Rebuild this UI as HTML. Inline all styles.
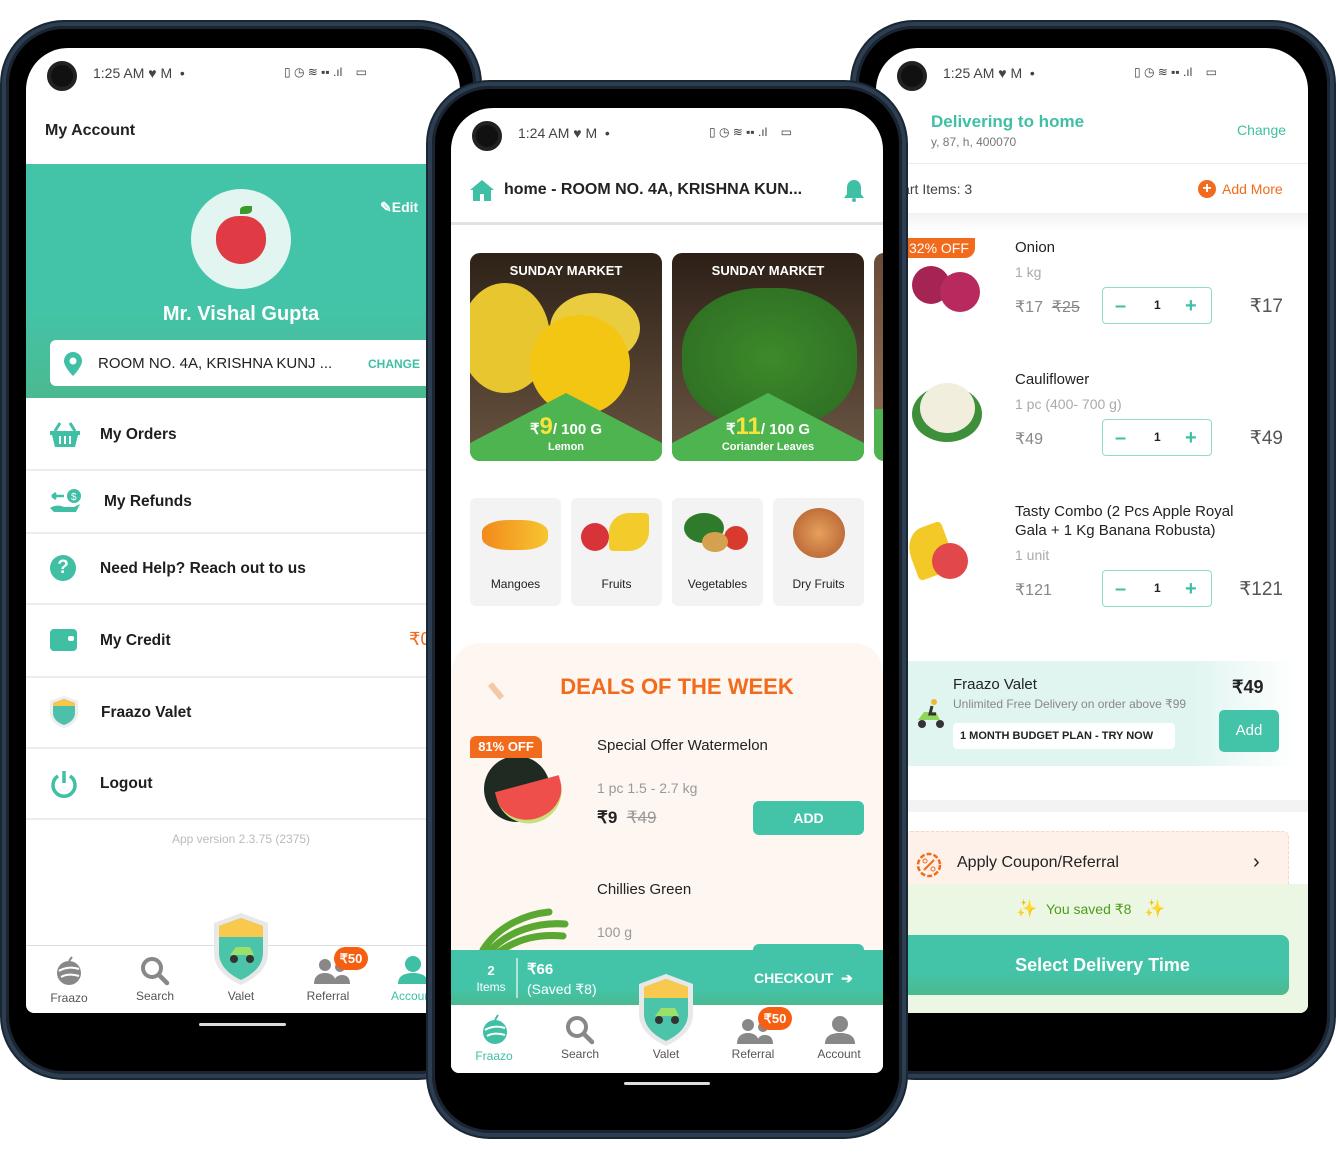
<!DOCTYPE html>
<html><head><meta charset="utf-8"><style>
*{margin:0;padding:0;box-sizing:border-box}
body{width:1336px;height:1171px;background:#fff;position:relative;overflow:hidden;font-family:"Liberation Sans",sans-serif;color:#222}
.a{position:absolute}
.phone{position:absolute;background:#000;border:4px solid #2c3e52;box-shadow:0 0 0 2px #1a2633, inset 0 0 0 3px #1b2430}
.scr{position:absolute;background:#fff;overflow:hidden;border-radius:42px 42px 8px 8px}
.t{position:absolute;white-space:nowrap}
.st{font-size:14px;color:#444}
.teal{color:#3fbfa4}
.line{position:absolute;height:2px;background:#ececec}
.hb{position:absolute;height:3px;background:#ddd;border-radius:2px}
.nav{font-size:12px;color:#555;text-align:center;width:80px}
.qty{position:absolute;width:110px;height:37px;border:1.5px solid #8fdcc9;border-radius:4px}
.qty span{position:absolute;top:7px;font-size:20px;color:#3fbfa4;font-weight:bold}
.pr{position:absolute;right:25px;font-size:19px;color:#555;text-align:right}
.m{font-size:15.5px;font-weight:bold;color:#1e1e1e}
</style></head><body>

<!-- LEFT PHONE -->
<div class="phone" style="left:2px;top:22px;width:478px;height:1056px;border-radius:62px"></div>
<div class="scr" style="left:26px;top:48px;width:434px;height:965px">
  <div class="a" style="left:21px;top:13px;width:30px;height:30px;border-radius:50%;background:#111;border:4px solid #222"></div>
  <div class="t st" style="left:67px;top:17px">1:25 AM ♥ M &nbsp;•</div>
  <div class="t st" style="left:258px;top:17px;font-size:12px">▯ ◷ ≋ ▪▪ .ıl &nbsp;&nbsp; ▭</div>
  <div class="t" style="left:19px;top:74px;font-size:16px;font-weight:bold;color:#222">My Account</div>
  <div class="a" style="left:0;top:116px;width:434px;height:234px;background:linear-gradient(#43c4a8 60%,#4bb990)"></div>
  <div class="a" style="left:165px;top:141px;width:100px;height:100px;border-radius:50%;background:#e2f5f1"></div>
  <div class="a" style="left:190px;top:168px;width:50px;height:48px;border-radius:45% 45% 50% 50%;background:#e03a45"></div>
  <div class="a" style="left:214px;top:158px;width:12px;height:8px;border-radius:50% 0;background:#3c9a2c"></div>
  <div class="t" style="left:0;width:430px;text-align:center;top:255px;font-size:20px;font-weight:bold;color:#fff">Mr. Vishal Gupta</div>
  <div class="t" style="left:354px;top:151px;font-size:14px;font-weight:bold;color:#fff">✎Edit</div>
  <div class="a" style="left:24px;top:292px;width:420px;height:46px;background:#fff;border-radius:6px"></div>
  <svg class="a" style="left:38px;top:304px" width="18" height="24" viewBox="0 0 18 24"><path d="M9 0C4 0 0 4 0 9c0 6 9 15 9 15s9-9 9-15C18 4 14 0 9 0z" fill="#3fbfa4"/><circle cx="9" cy="9" r="3.5" fill="#fff"/></svg>
  <div class="t" style="left:72px;top:307px;font-size:15px;color:#222">ROOM NO. 4A, KRISHNA KUNJ ...</div>
  <div class="t teal" style="left:342px;top:309px;font-size:12px;font-weight:bold">CHANGE</div>
  <svg class="a" style="left:24px;top:374px" width="30" height="26" viewBox="0 0 30 26"><path d="M10 1L5 9M20 1l5 8" stroke="#3fbfa4" stroke-width="3"/><path d="M0 9h30v4h-2l-3 12H5L2 13H0z" fill="#3fbfa4"/><path d="M10 14v8M15 14v8M20 14v8" stroke="#fff" stroke-width="2"/></svg>
  <div class="t m" style="left:74px;top:378px">My Orders</div>
  <div class="line" style="left:0;top:421px;width:434px"></div>
  <svg class="a" style="left:24px;top:440px" width="32" height="28" viewBox="0 0 32 28"><circle cx="24" cy="8" r="7" fill="#3fbfa4"/><text x="21" y="12" font-size="10" fill="#fff">$</text><path d="M2 8h12M2 8l4-3M2 8l4 3" stroke="#3fbfa4" stroke-width="2.5" fill="none"/><path d="M0 20c6-4 12-2 14-1h10l6-3-4 8H4z" fill="#3fbfa4"/></svg>
  <div class="t m" style="left:78px;top:445px">My Refunds</div>
  <div class="line" style="left:0;top:484px;width:434px"></div>
  <div class="a" style="left:24px;top:507px;width:26px;height:26px;border-radius:50%;background:#3fbfa4;color:#fff;font-weight:bold;font-size:19px;text-align:center;line-height:26px">?</div>
  <div class="t m" style="left:74px;top:512px">Need Help? Reach out to us</div>
  <div class="line" style="left:0;top:555px;width:434px"></div>
  <div class="a" style="left:24px;top:581px;width:27px;height:22px;border-radius:4px;background:#3fbfa4"></div>
  <div class="a" style="left:42px;top:588px;width:6px;height:5px;border-radius:2px;background:#fff"></div>
  <div class="t m" style="left:74px;top:584px">My Credit</div>
  <div class="t" style="left:383px;top:581px;font-size:18px;color:#f26b1d">₹0</div>
  <div class="line" style="left:0;top:628px;width:434px"></div>
  <svg class="a" style="left:24px;top:648px" width="28" height="32" viewBox="0 0 28 32"><path d="M14 0L28 5v12c0 8-7 13-14 15C7 30 0 25 0 17V5z" fill="#eee"/><path d="M14 3L25 7v10c0 6-5 10-11 12C8 27 3 23 3 17V7z" fill="#4cc0a8"/><path d="M3 7L14 3l11 4v3H3z" fill="#f7c64a"/></svg>
  <div class="t m" style="left:75px;top:656px">Fraazo Valet</div>
  <div class="line" style="left:0;top:699px;width:434px"></div>
  <svg class="a" style="left:24px;top:722px" width="28" height="28" viewBox="0 0 28 28"><path d="M8 6a11 11 0 1 0 12 0" stroke="#3fbfa4" stroke-width="3.5" fill="none"/><path d="M14 1v12" stroke="#3fbfa4" stroke-width="3.5"/></svg>
  <div class="t m" style="left:74px;top:727px">Logout</div>
  <div class="line" style="left:0;top:770px;width:434px"></div>
  <div class="t" style="left:0;width:430px;text-align:center;top:784px;font-size:12px;color:#bbb">App version 2.3.75 (2375)</div>
  <div class="line" style="left:0;top:897px;width:434px;height:1px;background:#ddd"></div>
  <svg class="a" style="left:29px;top:908px" width="28" height="30" viewBox="0 0 28 30"><circle cx="14" cy="17" r="12" fill="#888"/><path d="M4 15c6-4 14-4 20-2M6 21c5-3 12-3 18-1" stroke="#fff" stroke-width="2" fill="none"/><path d="M14 5l3-4" stroke="#888" stroke-width="2"/></svg>
  <div class="t nav" style="left:3px;top:943px">Fraazo</div>
  <svg class="a" style="left:114px;top:908px" width="30" height="30" viewBox="0 0 30 30"><circle cx="12" cy="12" r="9" stroke="#888" stroke-width="4" fill="none"/><path d="M19 19l8 8" stroke="#888" stroke-width="4.5" stroke-linecap="round"/></svg>
  <div class="t nav" style="left:89px;top:941px">Search</div>
  <svg class="a" style="left:188px;top:865px" width="54" height="72" viewBox="0 0 54 72"><path d="M27 0L54 10v30c0 16-14 26-27 32C14 66 0 56 0 40V10z" fill="#e8e8e8"/><path d="M27 5L49 13v27c0 13-11 22-22 27C16 62 5 53 5 40V13z" fill="#4cc4aa"/><path d="M5 13L27 5l22 8v11H5z" fill="#f8c94c"/><circle cx="20" cy="46" r="4" fill="#333"/><circle cx="36" cy="46" r="4" fill="#333"/><path d="M16 42h24l-4-8H22z" fill="#9be06a"/></svg>
  <div class="t nav" style="left:175px;top:941px">Valet</div>
  <svg class="a" style="left:288px;top:910px" width="36" height="26" viewBox="0 0 36 26"><circle cx="11" cy="7" r="6" fill="#888"/><path d="M0 26c0-8 5-11 11-11s11 3 11 11z" fill="#888"/><circle cx="26" cy="9" r="5" fill="#888"/><path d="M20 26c0-6 3-9 8-9s8 3 8 9z" fill="#888"/></svg>
  <div class="a" style="left:308px;top:899px;width:34px;height:23px;border-radius:12px;background:#f65e12;color:#fff;font-size:13px;font-weight:bold;text-align:center;line-height:23px">₹50</div>
  <div class="t nav" style="left:262px;top:941px">Referral</div>
  <svg class="a" style="left:372px;top:908px" width="30" height="28" viewBox="0 0 30 28"><circle cx="15" cy="8" r="8" fill="#3fbfa4"/><path d="M0 28c0-8 6-11 15-11s15 3 15 11z" fill="#3fbfa4"/></svg>
  <div class="t nav" style="left:365px;top:941px;color:#3fbfa4;text-align:left">Account</div>
</div>
<div class="hb" style="left:199px;top:1023px;width:87px"></div>

<!-- RIGHT PHONE -->
<div class="phone" style="left:852px;top:22px;width:482px;height:1056px;border-radius:62px"></div>
<div class="scr" style="left:876px;top:48px;width:432px;height:965px">
  <div class="a" style="left:21px;top:13px;width:30px;height:30px;border-radius:50%;background:#111;border:4px solid #222"></div>
  <div class="t st" style="left:67px;top:17px">1:25 AM ♥ M &nbsp;•</div>
  <div class="t st" style="left:258px;top:17px;font-size:12px">▯ ◷ ≋ ▪▪ .ıl &nbsp;&nbsp; ▭</div>
  <div class="t teal" style="left:55px;top:64px;font-size:17px;font-weight:bold">Delivering to home</div>
  <div class="t" style="left:55px;top:87px;font-size:12px;color:#777">y, 87, h, 400070</div>
  <div class="t teal" style="left:361px;top:74px;font-size:14px">Change</div>
  <div class="line" style="left:0;top:115px;width:432px;height:1px"></div>
  <div class="t" style="left:16px;top:133px;font-size:14px;color:#444">Cart Items: 3</div>
  <div class="a" style="left:322px;top:132px;width:18px;height:18px;border-radius:50%;background:#f26b1d;color:#fff;font-size:16px;font-weight:bold;text-align:center;line-height:18px">+</div>
  <div class="t" style="left:346px;top:133px;font-size:14px;color:#f26b1d">Add More</div>
  <div class="a" style="left:0;top:165px;width:432px;height:18px;background:linear-gradient(#f2f2f2,#fff)"></div>
  <!-- onion -->
  <div class="a" style="left:36px;top:218px;width:38px;height:38px;border-radius:50%;background:#a52454"></div>
  <div class="a" style="left:64px;top:224px;width:40px;height:40px;border-radius:50%;background:#b82a5d"></div>
  <div class="a" style="left:29px;top:190px;width:70px;height:20px;background:#f26b1d;border-radius:0 0 10px 0;color:#fff;font-size:14px;padding-left:4px;line-height:20px">32% OFF</div>
  <div class="t" style="left:139px;top:191px;font-size:15px">Onion</div>
  <div class="t" style="left:139px;top:216px;font-size:14px;color:#aaa">1 kg</div>
  <div class="t" style="left:139px;top:249px;font-size:16px;color:#888">₹17 &nbsp;<s>₹25</s></div>
  <div class="qty" style="left:226px;top:239px"><span style="left:12px">–</span><span style="left:51px;font-size:12px;color:#222;top:10px">1</span><span style="left:82px">+</span></div>
  <div class="pr" style="top:247px">₹17</div>
  <!-- cauliflower -->
  <div class="a" style="left:36px;top:338px;width:70px;height:56px;border-radius:50%;background:#3e8f3a"></div>
  <div class="a" style="left:44px;top:335px;width:55px;height:50px;border-radius:50%;background:#f1eedd"></div>
  <div class="t" style="left:139px;top:323px;font-size:15px">Cauliflower</div>
  <div class="t" style="left:139px;top:348px;font-size:14px;color:#aaa">1 pc (400- 700 g)</div>
  <div class="t" style="left:139px;top:381px;font-size:16px;color:#888">₹49</div>
  <div class="qty" style="left:226px;top:371px"><span style="left:12px">–</span><span style="left:51px;font-size:12px;color:#222;top:10px">1</span><span style="left:82px">+</span></div>
  <div class="pr" style="top:379px">₹49</div>
  <!-- combo -->
  <div class="a" style="left:34px;top:478px;width:40px;height:50px;border-radius:50% 10%;background:#f3c928;transform:rotate(-20deg)"></div>
  <div class="a" style="left:56px;top:495px;width:36px;height:36px;border-radius:50%;background:#e2474b"></div>
  <div class="t" style="left:139px;top:455px;font-size:15px">Tasty Combo (2 Pcs Apple Royal</div>
  <div class="t" style="left:139px;top:474px;font-size:15px">Gala + 1 Kg Banana Robusta)</div>
  <div class="t" style="left:139px;top:499px;font-size:14px;color:#aaa">1 unit</div>
  <div class="t" style="left:139px;top:532px;font-size:16px;color:#888">₹121</div>
  <div class="qty" style="left:226px;top:522px"><span style="left:12px">–</span><span style="left:51px;font-size:12px;color:#222;top:10px">1</span><span style="left:82px">+</span></div>
  <div class="pr" style="top:530px">₹121</div>
  <!-- valet -->
  <div class="a" style="left:0;top:613px;width:420px;height:105px;background:linear-gradient(90deg,#e0f5f0 75%,#fff)"></div>
  <svg class="a" style="left:36px;top:650px" width="36" height="32" viewBox="0 0 36 32"><path d="M6 22h22l-4-8H12z" fill="#8fd65a"/><circle cx="10" cy="26" r="4" fill="#333"/><circle cx="28" cy="26" r="4" fill="#333"/><circle cx="22" cy="4" r="3" fill="#f2b632"/><path d="M20 8l-2 8h6" stroke="#333" stroke-width="3" fill="none"/></svg>
  <div class="t" style="left:77px;top:628px;font-size:15px">Fraazo Valet</div>
  <div class="t" style="left:77px;top:649px;font-size:12px;color:#888">Unlimited Free Delivery on order above ₹99</div>
  <div class="a" style="left:77px;top:675px;width:222px;height:26px;background:#fff;border-radius:4px;font-size:11px;font-weight:bold;line-height:26px;padding-left:7px">1 MONTH BUDGET PLAN - TRY NOW</div>
  <div class="t" style="left:356px;top:629px;font-size:18px;font-weight:bold">₹49</div>
  <div class="a" style="left:343px;top:662px;width:60px;height:42px;background:#43c4a8;border-radius:5px;color:#fff;font-size:15px;text-align:center;line-height:42px">Add</div>
  <div class="a" style="left:0;top:752px;width:432px;height:12px;background:#f3f3f3"></div>
  <div class="a" style="left:29px;top:783px;width:384px;height:60px;background:#fdf1ea;border:1px dashed #f8d8c4;border-radius:6px"></div>
  <svg class="a" style="left:39px;top:803px" width="28" height="28" viewBox="0 0 28 28"><circle cx="14" cy="14" r="11" stroke="#f26b1d" stroke-width="2.5" fill="none" stroke-dasharray="5 2"/><path d="M9 19l10-10" stroke="#f26b1d" stroke-width="2"/><circle cx="10" cy="10" r="2" stroke="#f26b1d" fill="none"/><circle cx="18" cy="18" r="2" stroke="#f26b1d" fill="none"/></svg>
  <div class="t" style="left:81px;top:806px;font-size:16px">Apply Coupon/Referral</div>
  <div class="t" style="left:377px;top:803px;font-size:20px;color:#222">›</div>
  <div class="a" style="left:0;top:836px;width:432px;height:130px;background:#ecf7e3"></div>
  <div class="t" style="left:140px;top:851px;font-size:17px;color:#f5c23c">✨</div>
  <div class="t" style="left:170px;top:853px;font-size:14px;color:#4c9e1a">You saved ₹8</div>
  <div class="t" style="left:268px;top:851px;font-size:17px;color:#f5c23c">✨</div>
  <div class="a" style="left:20px;top:887px;width:393px;height:60px;background:linear-gradient(#43c4a8 60%,#4bb990);border-radius:8px;color:#fff;font-size:18px;font-weight:bold;text-align:center;line-height:60px;padding-left:20px">Select Delivery Time</div>
</div>

<!-- CENTER PHONE -->
<div class="phone" style="left:428px;top:82px;width:478px;height:1055px;border-radius:62px"></div>
<div class="scr" style="left:451px;top:108px;width:432px;height:965px">
  <div class="a" style="left:21px;top:13px;width:30px;height:30px;border-radius:50%;background:#111;border:4px solid #222"></div>
  <div class="t st" style="left:67px;top:17px">1:24 AM ♥ M &nbsp;•</div>
  <div class="t st" style="left:258px;top:17px;font-size:12px">▯ ◷ ≋ ▪▪ .ıl &nbsp;&nbsp; ▭</div>
  <svg class="a" style="left:19px;top:72px" width="24" height="21" viewBox="0 0 24 21"><path d="M12 0L0 10h3v11h7v-7h4v7h7V10h3z" fill="#3fbfa4"/></svg>
  <div class="t" style="left:53px;top:73px;font-size:16px;font-weight:bold;color:#222">home - ROOM NO. 4A, KRISHNA KUN...</div>
  <svg class="a" style="left:393px;top:72px" width="20" height="22" viewBox="0 0 20 22"><path d="M10 0c-4 0-7 3-7 8v6l-3 4h20l-3-4V8c0-5-3-8-7-8z" fill="#3fbfa4"/><circle cx="10" cy="20" r="2" fill="#3fbfa4"/></svg>
  <div class="a" style="left:0;top:114px;width:432px;height:3px;background:#e2e2e2"></div>
  <!-- banners -->
  <div class="a" style="left:19px;top:145px;width:192px;height:208px;border-radius:10px;overflow:hidden;background:linear-gradient(#2e2218,#6a5440)">
    <div class="a" style="left:-10px;top:30px;width:90px;height:110px;border-radius:50%;background:#e8c630"></div>
    <div class="a" style="left:80px;top:40px;width:90px;height:70px;border-radius:50%;background:#e9cd3e"></div>
    <div class="a" style="left:60px;top:62px;width:100px;height:100px;border-radius:50%;background:#f2c613"></div>
    <svg class="a" style="left:0;top:140px" width="192" height="68"><path d="M0 50L96 0l96 50v18H0z" fill="#4db44f"/></svg>
    <div class="t" style="left:0;width:192px;text-align:center;top:10px;color:#fff;font-size:13px;font-weight:bold">SUNDAY MARKET</div>
    <div class="t" style="left:0;width:192px;text-align:center;top:160px;color:#fff;font-size:15px;font-weight:bold">₹<span style="color:#f6e33b;font-size:24px">9</span>/ 100 G</div>
    <div class="t" style="left:0;width:192px;text-align:center;top:188px;color:#fff;font-size:11px;font-weight:bold">Lemon</div>
  </div>
  <div class="a" style="left:221px;top:145px;width:192px;height:208px;border-radius:10px;overflow:hidden;background:linear-gradient(#2d1f17,#6d5845)">
    <div class="a" style="left:10px;top:35px;width:175px;height:140px;border-radius:45%;background:radial-gradient(#3d8a2a,#2b6a22)"></div>
    <svg class="a" style="left:0;top:140px" width="192" height="68"><path d="M0 50L96 0l96 50v18H0z" fill="#4db44f"/></svg>
    <div class="t" style="left:0;width:192px;text-align:center;top:10px;color:#fff;font-size:13px;font-weight:bold">SUNDAY MARKET</div>
    <div class="t" style="left:0;width:192px;text-align:center;top:160px;color:#fff;font-size:15px;font-weight:bold">₹<span style="color:#f6e33b;font-size:24px">11</span>/ 100 G</div>
    <div class="t" style="left:0;width:192px;text-align:center;top:188px;color:#fff;font-size:11px;font-weight:bold">Coriander Leaves</div>
  </div>
  <div class="a" style="left:423px;top:145px;width:20px;height:208px;border-radius:10px 0 0 10px;background:linear-gradient(#6a4a38,#8a6850 75%,#4db44f 75%)"></div>
  <!-- categories -->
  <div class="a" style="left:19px;top:390px;width:91px;height:108px;background:#f3f3f3;border-radius:6px"><div class="a" style="left:12px;top:22px;width:66px;height:30px;border-radius:40%;background:linear-gradient(90deg,#f28a1c,#f7c531)"></div><div class="t" style="left:0;width:91px;text-align:center;top:79px;font-size:12px">Mangoes</div></div>
  <div class="a" style="left:120px;top:390px;width:91px;height:108px;background:#f3f3f3;border-radius:6px"><div class="a" style="left:10px;top:25px;width:28px;height:28px;border-radius:50%;background:#d9333a"></div><div class="a" style="left:38px;top:15px;width:40px;height:38px;border-radius:50% 10%;background:#f3cb2a"></div><div class="t" style="left:0;width:91px;text-align:center;top:79px;font-size:12px">Fruits</div></div>
  <div class="a" style="left:221px;top:390px;width:91px;height:108px;background:#f3f3f3;border-radius:6px"><div class="a" style="left:12px;top:15px;width:40px;height:30px;border-radius:50%;background:#2f7b2c"></div><div class="a" style="left:52px;top:28px;width:24px;height:24px;border-radius:50%;background:#d83a2e"></div><div class="a" style="left:30px;top:34px;width:26px;height:20px;border-radius:50%;background:#d4a24e"></div><div class="t" style="left:0;width:91px;text-align:center;top:79px;font-size:12px">Vegetables</div></div>
  <div class="a" style="left:322px;top:390px;width:91px;height:108px;background:#f3f3f3;border-radius:6px"><div class="a" style="left:20px;top:10px;width:52px;height:50px;border-radius:50%;background:radial-gradient(#e6a05c,#b05a2c)"></div><div class="t" style="left:0;width:91px;text-align:center;top:79px;font-size:12px">Dry Fruits</div></div>
  <!-- deals -->
  <div class="a" style="left:0;top:535px;width:432px;height:320px;background:#fdf6f1;border-radius:30px 30px 0 0"></div>
  <div class="t" style="left:10px;width:432px;text-align:center;top:566px;font-size:22px;font-weight:bold;color:#f26b1d">DEALS OF THE WEEK</div>
  <div class="a" style="left:42px;top:574px;width:6px;height:18px;background:#f3c9a8;transform:rotate(-40deg)"></div>
  <div class="a" style="left:33px;top:648px;width:66px;height:66px;border-radius:50%;background:#1f2a22"></div>
  <div class="a" style="left:48px;top:675px;width:66px;height:40px;border-radius:0 0 40px 40px;background:#ef4f4a;border-bottom:4px solid #c9e07a;transform:rotate(-15deg)"></div>
  <div class="a" style="left:19px;top:628px;width:72px;height:22px;background:#f26b1d;border-radius:6px 8px 0 0;color:#fff;font-size:13px;font-weight:bold;line-height:22px;text-align:center">81% OFF</div>
  <div class="t" style="left:146px;top:629px;font-size:15px">Special Offer Watermelon</div>
  <div class="t" style="left:146px;top:672px;font-size:14px;color:#999">1 pc 1.5 - 2.7 kg</div>
  <div class="t" style="left:146px;top:700px;font-size:17px;font-weight:bold">₹9 &nbsp;<s style="color:#999;font-weight:normal">₹49</s></div>
  <div class="a" style="left:302px;top:693px;width:111px;height:34px;background:#43c4a8;border-radius:6px;color:#fff;font-size:14px;font-weight:bold;text-align:center;line-height:34px">ADD</div>
  <div class="t" style="left:146px;top:773px;font-size:15px">Chillies Green</div>
  <div class="t" style="left:146px;top:816px;font-size:14px;color:#999">100 g</div>
  <svg class="a" style="left:28px;top:796px" width="90" height="50" viewBox="0 0 90 50"><path d="M4 46C20 20 50 10 70 8M10 48C30 26 60 18 86 20M20 48C40 34 60 30 84 32" stroke="#5aa832" stroke-width="7" fill="none" stroke-linecap="round"/></svg>
  <div class="a" style="left:302px;top:836px;width:111px;height:20px;background:#43c4a8;border-radius:6px"></div>
  <!-- checkout -->
  <div class="a" style="left:0;top:842px;width:432px;height:55px;background:linear-gradient(#43c4a8 70%,#4bb990)"></div>
  <div class="t" style="left:22px;top:855px;color:#fff;font-size:13px;font-weight:bold;text-align:center;width:36px">2</div>
  <div class="t" style="left:22px;top:872px;color:#fff;font-size:12px;text-align:center;width:36px">Items</div>
  <div class="a" style="left:65px;top:850px;width:2px;height:40px;background:#aee6d8"></div>
  <div class="t" style="left:76px;top:852px;color:#fff;font-size:15px;font-weight:bold">₹66</div>
  <div class="t" style="left:76px;top:873px;color:#fff;font-size:14px">(Saved ₹8)</div>
  <div class="t" style="left:303px;top:862px;color:#fff;font-size:14px;font-weight:bold">CHECKOUT &nbsp;➔</div>
  <!-- nav -->
  <div class="a" style="left:0;top:897px;width:432px;height:68px;background:#fff"></div>
  <svg class="a" style="left:30px;top:905px" width="28" height="32" viewBox="0 0 28 32"><circle cx="14" cy="19" r="12" fill="#3fbfa4"/><path d="M4 17c6-4 14-4 20-2M6 23c5-3 12-3 18-1" stroke="#fff" stroke-width="2" fill="none"/><path d="M14 7l3-5" stroke="#3fbfa4" stroke-width="2"/></svg>
  <div class="t nav" style="left:3px;top:941px;color:#3fbfa4">Fraazo</div>
  <svg class="a" style="left:114px;top:907px" width="30" height="30" viewBox="0 0 30 30"><circle cx="12" cy="12" r="9" stroke="#888" stroke-width="4" fill="none"/><path d="M19 19l8 8" stroke="#888" stroke-width="4.5" stroke-linecap="round"/></svg>
  <div class="t nav" style="left:89px;top:939px">Search</div>
  <svg class="a" style="left:188px;top:866px" width="54" height="72" viewBox="0 0 54 72"><path d="M27 0L54 10v30c0 16-14 26-27 32C14 66 0 56 0 40V10z" fill="#e8e8e8"/><path d="M27 5L49 13v27c0 13-11 22-22 27C16 62 5 53 5 40V13z" fill="#4cc4aa"/><path d="M5 13L27 5l22 8v11H5z" fill="#f8c94c"/><circle cx="20" cy="46" r="4" fill="#333"/><circle cx="36" cy="46" r="4" fill="#333"/><path d="M16 42h24l-4-8H22z" fill="#9be06a"/></svg>
  <div class="t nav" style="left:175px;top:939px">Valet</div>
  <svg class="a" style="left:286px;top:910px" width="36" height="26" viewBox="0 0 36 26"><circle cx="11" cy="7" r="6" fill="#888"/><path d="M0 26c0-8 5-11 11-11s11 3 11 11z" fill="#888"/><circle cx="26" cy="9" r="5" fill="#888"/><path d="M20 26c0-6 3-9 8-9s8 3 8 9z" fill="#888"/></svg>
  <div class="a" style="left:307px;top:899px;width:34px;height:23px;border-radius:12px;background:#f65e12;color:#fff;font-size:13px;font-weight:bold;text-align:center;line-height:23px">₹50</div>
  <div class="t nav" style="left:262px;top:939px">Referral</div>
  <svg class="a" style="left:374px;top:908px" width="30" height="28" viewBox="0 0 30 28"><circle cx="15" cy="8" r="8" fill="#888"/><path d="M0 28c0-8 6-11 15-11s15 3 15 11z" fill="#888"/></svg>
  <div class="t nav" style="left:348px;top:939px">Account</div>
</div>
<div class="hb" style="left:624px;top:1082px;width:86px"></div>
</body></html>
